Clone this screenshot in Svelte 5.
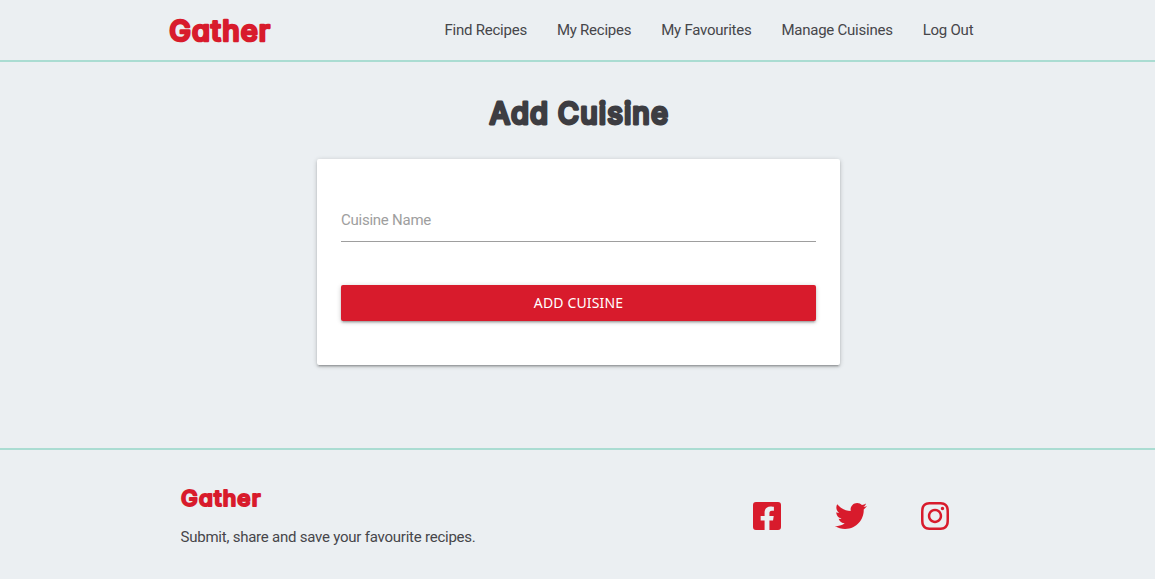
<script>
  const links = ['Find Recipes', 'My Recipes', 'My Favourites', 'Manage Cuisines', 'Log Out'];
  const social = [
    { name: 'Facebook', w: 448, d: 'M400 32H48A48 48 0 0 0 0 80v352a48 48 0 0 0 48 48h137.25V327.69h-63V256h63v-54.64c0-62.15 37-96.48 93.67-96.48 27.14 0 55.52 4.84 55.52 4.84v61h-31.27c-30.81 0-40.42 19.12-40.42 38.73V256h68.78l-11 71.69h-57.78V480H400a48 48 0 0 0 48-48V80a48 48 0 0 0-48-48z' },
    { name: 'Twitter', w: 512, d: 'M459.37 151.716c.325 4.548.325 9.097.325 13.645 0 138.72-105.583 298.558-298.558 298.558-59.452 0-114.68-17.219-161.137-47.106 8.447.974 16.568 1.299 25.34 1.299 49.055 0 94.213-16.568 130.274-44.832-46.132-.975-84.792-31.188-98.112-72.772 6.498.974 12.995 1.624 19.818 1.624 9.421 0 18.843-1.3 27.614-3.573-48.081-9.747-84.143-51.98-84.143-102.985v-1.299c13.969 7.797 30.214 12.67 47.431 13.319-28.264-18.843-46.781-51.005-46.781-87.391 0-19.492 5.197-37.36 14.294-52.954 51.655 63.675 129.3 105.258 216.365 109.807-1.624-7.797-2.599-15.918-2.599-24.04 0-57.828 46.782-104.934 104.934-104.934 30.213 0 57.502 12.67 76.67 33.137 23.715-4.548 46.456-13.32 66.599-25.34-7.798 24.366-24.366 44.833-46.132 57.827 21.117-2.273 41.584-8.122 60.426-16.243-14.292 20.791-32.161 39.308-52.628 54.253z' },
    { name: 'Instagram', w: 448, d: 'M224.1 141c-63.6 0-114.9 51.3-114.9 114.9s51.3 114.9 114.9 114.9S339 319.5 339 255.9 287.7 141 224.1 141zm0 189.6c-41.1 0-74.7-33.5-74.7-74.7s33.5-74.7 74.7-74.7 74.7 33.5 74.7 74.7-33.6 74.7-74.7 74.7zm146.4-194.3c0 14.9-12 26.8-26.8 26.8-14.9 0-26.8-12-26.8-26.8s12-26.8 26.8-26.8 26.8 12 26.8 26.8zm76.1 27.2c-1.7-35.9-9.9-67.7-36.2-93.9-26.2-26.2-58-34.4-93.9-36.2-37-2.1-147.9-2.1-184.9 0-35.8 1.7-67.6 9.9-93.9 36.1s-34.4 58-36.2 93.9c-2.1 37-2.1 147.9 0 184.9 1.7 35.9 9.9 67.7 36.2 93.9s58 34.4 93.9 36.2c37 2.1 147.9 2.1 184.9 0 35.9-1.7 67.7-9.9 93.9-36.2 26.2-26.2 34.4-58 36.2-93.9 2.1-37 2.1-147.8 0-184.8zM398.8 388c-7.8 19.6-22.9 34.7-42.6 42.6-29.5 11.7-99.5 9-132.1 9s-102.7 2.6-132.1-9c-19.6-7.8-34.7-22.9-42.6-42.6-11.7-29.5-9-99.5-9-132.1s-2.6-102.7 9-132.1c7.8-19.6 22.9-34.7 42.6-42.6 29.5-11.7 99.5-9 132.1-9s102.7-2.6 132.1 9c19.6 7.8 34.7 22.9 42.6 42.6 11.7 29.5 9 99.5 9 132.1s2.7 102.7-9 132.1z' }
  ];
</script>

<!-- Display lettering is SVG text so that its outline can have round joins -->
{#snippet lettering(text, w, h, baseline, size, stroke)}
  <svg class="lettering" width={w} height={h}>
    <text x={stroke / 2 - 1} y={baseline} font-size={size} stroke-width={stroke} textLength={w - stroke + 2.5} lengthAdjust="spacingAndGlyphs">{text}</text>
  </svg>
{/snippet}

<div class="page">
  <header>
    <div class="bar">
      <a class="brand" href="#home">{@render lettering('Gather', 102, 60, 40.5, 28, 2.6)}</a>
      <nav>
        {#each links as link}<a href="#nav">{link}</a>{/each}
      </nav>
    </div>
  </header>
  <main>
    <h1>{@render lettering('Add Cuisine', 180, 41, 29.5, 30, 2.9)}</h1>
    <form>
      <input type="text" placeholder="Cuisine Name" aria-label="Cuisine Name" />
      <button type="button">ADD CUISINE</button>
    </form>
  </main>
  <footer>
    <div class="foot">
      <div>
        <div class="brand small">{@render lettering('Gather', 80, 30, 22, 21.8, 2.1)}</div>
        <p>Submit, share and save your favourite recipes.</p>
      </div>
      <div class="social">
        {#each social as s}
          <a href="#social" aria-label={s.name}>
            <svg viewBox="0 0 {s.w} 512" height="32" width={s.w / 16}><path d={s.d} /></svg>
          </a>
        {/each}
      </div>
    </div>
  </footer>
</div>

<style>
  :global(body) { background: #ebeff2; }
  * { box-sizing: border-box; }
  .page {
    height: 579px;
    display: flex;
    flex-direction: column;
    background: #ebeff2;
    color: #46464a;
    font: 400 15px/22px Roboto, sans-serif;
    overflow: hidden;
  }
  a { color: inherit; text-decoration: none; }
  header { height: 62px; border-bottom: 2px solid #aadcd2; }
  .bar { width: 819px; height: 60px; margin-left: 169.3px; display: flex; justify-content: space-between; }
  svg { display: block; fill: #d81b2c; }
  .lettering {
    overflow: visible;
    fill: currentColor;
    stroke: currentColor;
    stroke-linejoin: round;
    font-family: Inter, sans-serif;
    font-weight: 500;
    font-feature-settings: "cv11" 1;
    letter-spacing: 1.1px;
  }
  .brand { color: #d81b2c; }
  nav { display: flex; letter-spacing: -.24px; }
  nav a { padding: 0 15px; line-height: 60px; }
  main { flex: 1; display: flex; flex-direction: column; align-items: center; padding-left: 2px; }
  h1 { margin: 32px 0 24px; color: #3d3d42; }
  form {
    width: 523px;
    height: 206px;
    padding: 39px 24px 0;
    background: #fff;
    border-radius: 2px;
    box-shadow: 0 2px 2px 0 rgba(0,0,0,.14), 0 3px 1px -2px rgba(0,0,0,.12), 0 1px 5px 0 rgba(0,0,0,.2);
  }
  input {
    display: block;
    width: 100%;
    height: 44px;
    padding: 1px 0 0;
    border: 0;
    border-bottom: 1px solid #9e9e9e;
    outline: 0;
    background: none;
    font: 400 15px Roboto, sans-serif;
    letter-spacing: -.25px;
  }
  input::placeholder { color: #9e9e9e; opacity: 1; }
  button {
    display: block;
    width: 100%;
    height: 36px;
    margin-top: 43px;
    padding: 0;
    border: 0;
    border-radius: 2px;
    background: #d81b2c;
    color: #fff;
    font: 400 14px/36px "Noto Sans", sans-serif;
    letter-spacing: .15px;
    box-shadow: 0 2px 2px 0 rgba(0,0,0,.14), 0 3px 1px -2px rgba(0,0,0,.12), 0 1px 5px 0 rgba(0,0,0,.2);
  }
  footer { height: 131px; border-top: 2px solid #aadcd2; }
  .foot { width: 768.5px; margin-left: 180.5px; display: flex; justify-content: space-between; }
  .small { margin-top: 34px; }
  p { margin: 12px 0 0; letter-spacing: -.23px; }
  .social { display: flex; gap: 54px; padding-top: 50px; }
</style>
